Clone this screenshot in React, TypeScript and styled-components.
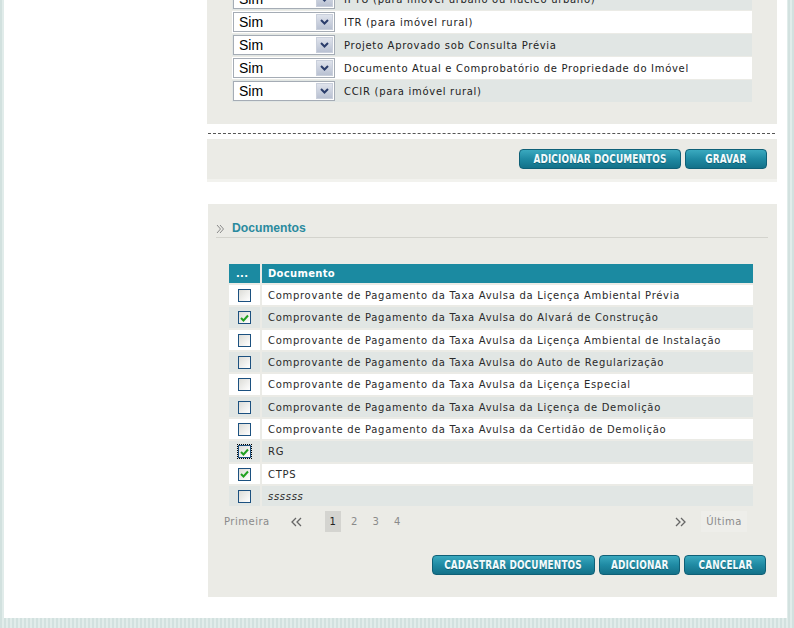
import React from "react";
import styled, { createGlobalStyle } from "styled-components";

const GlobalStyle = createGlobalStyle`
  html, body { margin: 0; padding: 0; background: #ffffff; overflow: hidden; }
  * { box-sizing: border-box; }
`;

const stripe = `repeating-linear-gradient(90deg, #d2e1df 0 2px, #e1ecea 2px 4px)`;

const Frame = styled.div`
  width: 794px;
  height: 628px;
  padding: 0 7px 10px 4px;
  background: ${stripe};
`;

const Sheet = styled.div`
  height: 100%;
  background: #ffffff;
  display: grid;
  grid-template-columns: 203px 570px;
  overflow: hidden;
`;

const Sidebar = styled.div``;

const Main = styled.div`
  display: flex;
  flex-direction: column;
`;

const FormPanel = styled.div`
  background: #ebebe6;
  margin-top: -19px;
  padding: 7px 25px 22px 25px;
  display: flex;
  flex-direction: column;
  gap: 1px;
`;

const FieldRow = styled.div<{ $alt?: boolean }>`
  height: 22px;
  display: flex;
  align-items: center;
  background: ${(p) => (p.$alt ? "#e1e6e4" : "#ffffff")};
  padding-left: 1px;
`;

const SelectBox = styled.div`
  width: 102px;
  height: 20px;
  background: #fff;
  border: 1px solid #a5acb5;
  display: flex;
  align-items: center;
  justify-content: space-between;
  padding: 1px 1px 1px 5px;
  font-family: "Liberation Sans", Arial, sans-serif;
  font-size: 14px;
  color: #000;
`;

const SelectArrow = styled.span`
  width: 17px;
  height: 16px;
  background: linear-gradient(#dfe3ec, #b9c1d2);
  border: 1px solid #c9cfdb;
  display: flex;
  align-items: center;
  justify-content: center;
`;

const FieldLabel = styled.span`
  margin-left: 9px;
  font-family: "DejaVu Sans", Verdana, sans-serif;
  font-size: 10px;
  letter-spacing: 0.7px;
  color: #222;
`;

const Divider = styled.div`
  margin: 9px 2px 5px 1px;
  border-top: 1px dashed #555;
`;

const ActionBar = styled.div`
  background: #ebebe6;
  height: 43px;
  padding: 10px 10px 0 0;
  display: flex;
  justify-content: flex-end;
  gap: 4px;
  border-bottom: 3px solid #f2f2ee;
`;

const Button = styled.button<{ $w: number }>`
  width: ${(p) => p.$w}px;
  height: 20px;
  border: 1px solid #0f6077;
  border-radius: 4px;
  background: linear-gradient(#3aa9bf, #1f8aa3 50%, #137189);
  color: #ffffff;
  padding: 0;
  cursor: pointer;
  display: flex;
  align-items: center;
  justify-content: center;
  overflow: hidden;
`;

const ButtonText = styled.span`
  display: inline-block;
  white-space: nowrap;
  font-family: "DejaVu Sans", "Liberation Sans", sans-serif;
  font-weight: bold;
  font-size: 12px;
  letter-spacing: 0.2px;
  transform: scaleX(0.74);
  color: #f4fbfc;
  text-shadow: 0 1px 0 rgba(0, 0, 0, 0.25);
`;

const DocsPanel = styled.div`
  margin-top: 22px;
  margin-left: 1px;
  background: #ebebe6;
  padding: 17px 11px 22px 0;
  display: flex;
  flex-direction: column;
`;

const SectionTitle = styled.div`
  margin: 0 -2px 0 8px;
  height: 17px;
  border-bottom: 1px solid #d3d3cd;
  display: flex;
  align-items: flex-start;
  gap: 7px;
  font-family: "Liberation Sans", Arial, sans-serif;
  font-weight: bold;
  font-size: 12.2px;
  color: #2a8a9e;
`;

const TitleIcon = styled.span`
  display: flex;
  padding-top: 3px;
`;

const DocTable = styled.table`
  margin: 24px 0 0 21px;
  width: 524px;
  border-collapse: separate;
  border-spacing: 0 2px;
  font-family: "DejaVu Sans", Verdana, sans-serif;
  font-size: 10px;
  letter-spacing: 0.7px;
`;

const HeadCell = styled.th<{ $narrow?: boolean }>`
  height: 19px;
  background: #1b8aa1;
  color: #ffffff;
  font-weight: bold;
  letter-spacing: 0.3px;
  text-align: left;
  padding: 0 0 0 ${(p) => (p.$narrow ? 7 : 6)}px;
  width: ${(p) => (p.$narrow ? "31px" : "auto")};
  border-left: ${(p) => (p.$narrow ? "none" : "2px solid #ebebe6")};
`;

const Row = styled.tr<{ $alt?: boolean }>`
  background: ${(p) => (p.$alt ? "#e1e6e4" : "#ffffff")};
`;

const CheckCell = styled.td<{ $tall?: boolean }>`
  height: ${(p) => (p.$tall ? 21 : 20)}px;
  padding: 0;
  text-align: center;
  vertical-align: middle;
`;

const DocCell = styled.td<{ $italic?: boolean }>`
  padding: 0 0 0 6px;
  color: #2a2a2a;
  border-left: 2px solid #ebebe6;
  vertical-align: middle;
  font-style: ${(p) => (p.$italic ? "italic" : "normal")};
`;

const Check = styled.span<{ $focus?: boolean }>`
  display: inline-flex;
  width: 13px;
  height: 13px;
  border: 1px solid #1c5180;
  background: linear-gradient(135deg, #dcdcd7, #ffffff);
  align-items: center;
  justify-content: center;
  vertical-align: middle;
  outline: ${(p) => (p.$focus ? "1px dotted #000" : "none")};
  outline-offset: 0px;
`;

const Pager = styled.div`
  margin: 3px 0 0 16px;
  height: 21px;
  display: flex;
  align-items: center;
  font-family: "DejaVu Sans", Verdana, sans-serif;
  font-size: 10px;
  letter-spacing: 0.5px;
  color: #8a8a8a;
`;

const PagerLink = styled.span<{ $w: number }>`
  width: ${(p) => p.$w}px;
  display: flex;
  align-items: center;
`;

const PageNum = styled.span<{ $active?: boolean }>`
  width: 16px;
  height: 21px;
  margin-right: 5.5px;
  display: flex;
  align-items: center;
  justify-content: center;
  background: ${(p) => (p.$active ? "#d4d4d0" : "transparent")};
  color: ${(p) => (p.$active ? "#222" : "#8a8a8a")};
`;

const Spacer = styled.span`
  flex: 1;
`;

const LastLink = styled.span`
  width: 46px;
  height: 21px;
  margin: 0 19px 0 15px;
  display: flex;
  align-items: center;
  justify-content: center;
  background: #eeeeea;
`;

const BottomBar = styled.div`
  margin-top: 23px;
  display: flex;
  justify-content: flex-end;
  gap: 4px;
`;

const Chevron = () => (
  <svg width="9" height="6" viewBox="0 0 9 6">
    <path d="M1 1 L4.5 4.5 L8 1" fill="none" stroke="#2b3d6b" strokeWidth="2" />
  </svg>
);

const CheckMark = () => (
  <svg width="9" height="8" viewBox="0 0 9 8">
    <path d="M1 4 L3.5 6.5 L8 1.5" fill="none" stroke="#21a121" strokeWidth="2" />
  </svg>
);

const DoubleLeft = () => (
  <svg width="11" height="10" viewBox="0 0 11 10">
    <path d="M5 1 L1 5 L5 9 M10 1 L6 5 L10 9" fill="none" stroke="#666" strokeWidth="1.3" />
  </svg>
);

const DoubleRight = () => (
  <svg width="11" height="10" viewBox="0 0 11 10">
    <path d="M1 1 L5 5 L1 9 M6 1 L10 5 L6 9" fill="none" stroke="#666" strokeWidth="1.3" />
  </svg>
);

const TitleArrow = () => (
  <svg width="9" height="10" viewBox="0 0 9 10">
    <path d="M1 1 L4.5 5 L1 9 M4 1 L7.5 5 L4 9" fill="none" stroke="#8a8a8a" strokeWidth="1" />
  </svg>
);

const fields = [
  "IPTU (para imóvel urbano ou núcleo urbano)",
  "ITR (para imóvel rural)",
  "Projeto Aprovado sob Consulta Prévia",
  "Documento Atual e Comprobatório de Propriedade do Imóvel",
  "CCIR (para imóvel rural)",
];

const docs: { name: string; checked?: boolean; focus?: boolean; italic?: boolean; tall?: boolean }[] = [
  { name: "Comprovante de Pagamento da Taxa Avulsa da Liçença Ambiental Prévia" },
  { name: "Comprovante de Pagamento da Taxa Avulsa do Alvará de Construção", checked: true, tall: true },
  { name: "Comprovante de Pagamento da Taxa Avulsa da Liçença Ambiental de Instalação" },
  { name: "Comprovante de Pagamento da Taxa Avulsa do Auto de Regularização" },
  { name: "Comprovante de Pagamento da Taxa Avulsa da Liçença Especial", tall: true },
  { name: "Comprovante de Pagamento da Taxa Avulsa da Liçença de Demolição" },
  { name: "Comprovante de Pagamento da Taxa Avulsa da Certidão de Demolição" },
  { name: "RG", checked: true, focus: true, tall: true },
  { name: "CTPS", checked: true },
  { name: "ssssss", italic: true },
];

export default function App() {
  return (
    <>
      <GlobalStyle />
      <Frame>
        <Sheet>
          <Sidebar />
          <Main>
            <FormPanel>
              {fields.map((f, i) => (
                <FieldRow key={f} $alt={i % 2 === 0}>
                  <SelectBox>
                    Sim
                    <SelectArrow>
                      <Chevron />
                    </SelectArrow>
                  </SelectBox>
                  <FieldLabel>{f}</FieldLabel>
                </FieldRow>
              ))}
            </FormPanel>
            <Divider />
            <ActionBar>
              <Button $w={162}>
                <ButtonText>ADICIONAR DOCUMENTOS</ButtonText>
              </Button>
              <Button $w={82}>
                <ButtonText>GRAVAR</ButtonText>
              </Button>
            </ActionBar>
            <DocsPanel>
              <SectionTitle>
                <TitleIcon>
                  <TitleArrow />
                </TitleIcon>
                Documentos
              </SectionTitle>
              <DocTable>
                <thead>
                  <tr>
                    <HeadCell $narrow>...</HeadCell>
                    <HeadCell>Documento</HeadCell>
                  </tr>
                </thead>
                <tbody>
                  {docs.map((d, i) => (
                    <Row key={d.name} $alt={i % 2 === 1}>
                      <CheckCell $tall={d.tall}>
                        <Check $focus={d.focus}>{d.checked && <CheckMark />}</Check>
                      </CheckCell>
                      <DocCell $italic={d.italic}>{d.name}</DocCell>
                    </Row>
                  ))}
                </tbody>
              </DocTable>
              <Pager>
                <PagerLink $w={67}>Primeira</PagerLink>
                <PagerLink $w={34}>
                  <DoubleLeft />
                </PagerLink>
                <PageNum $active>1</PageNum>
                <PageNum>2</PageNum>
                <PageNum>3</PageNum>
                <PageNum>4</PageNum>
                <Spacer />
                <DoubleRight />
                <LastLink>Última</LastLink>
              </Pager>
              <BottomBar>
                <Button $w={163}>
                  <ButtonText>CADASTRAR DOCUMENTOS</ButtonText>
                </Button>
                <Button $w={81}>
                  <ButtonText>ADICIONAR</ButtonText>
                </Button>
                <Button $w={82}>
                  <ButtonText>CANCELAR</ButtonText>
                </Button>
              </BottomBar>
            </DocsPanel>
          </Main>
        </Sheet>
      </Frame>
    </>
  );
}
